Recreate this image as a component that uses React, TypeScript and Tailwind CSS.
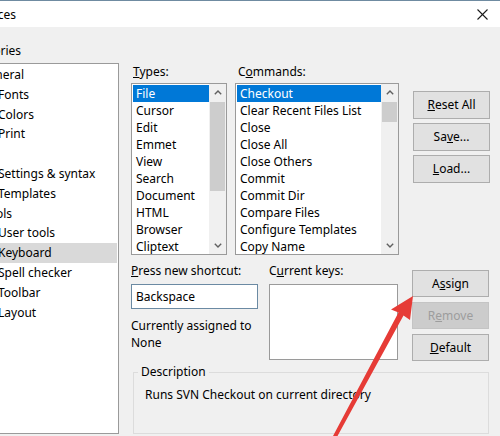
import React from "react";

const font = { fontFamily: '"Noto Sans", "Liberation Sans", sans-serif' };

function Chevron({ up }: { up: boolean }) {
  return (
    <svg width="8" height="5" viewBox="0 0 8 5">
      {up ? (
        <polyline points="0.8,4.2 4,1 7.2,4.2" fill="none" stroke="#606060" strokeWidth="1.4" />
      ) : (
        <polyline points="0.8,0.8 4,4 7.2,0.8" fill="none" stroke="#606060" strokeWidth="1.4" />
      )}
    </svg>
  );
}

function ListBox({
  items,
  width,
  thumbH,
}: {
  items: string[];
  width: string;
  thumbH: string;
}) {
  return (
    <div className={`${width} mt-[3px] h-[172px] border border-[#9a9a9a] bg-white flex flex-row overflow-hidden`}>
      <div className="flex-1 flex flex-col pt-[1px] pl-[1px] min-w-0">
        {items.map((it, i) => (
          <div
            key={it}
            className={
              i === 0
                ? "h-[17px] leading-[17px] pl-[3px] whitespace-nowrap bg-[#0078d7] text-white shrink-0"
                : "h-[17px] leading-[17px] pl-[3px] whitespace-nowrap text-black shrink-0"
            }
          >
            {it}
          </div>
        ))}
      </div>
      <div className="w-[17px] shrink-0 flex flex-col bg-[#f0f0f0]">
        <div className="h-[17px] flex items-center justify-center shrink-0">
          <Chevron up />
        </div>
        <div className={`${thumbH} mt-[1px] mx-[1px] bg-[#cdcdcd] shrink-0`} />
        <div className="flex-1" />
        <div className="h-[17px] flex items-center justify-center shrink-0">
          <Chevron up={false} />
        </div>
      </div>
    </div>
  );
}

function Btn({
  children,
  h,
  disabled,
}: {
  children: React.ReactNode;
  h: string;
  disabled?: boolean;
}) {
  return (
    <div
      className={
        disabled
          ? `${h} border border-[#c4c4c4] bg-[#cccccc] text-[#9d9d9d] flex items-center justify-center`
          : `${h} border border-[#adadad] bg-[#e1e1e1] text-black flex items-center justify-center`
      }
    >
      {children}
    </div>
  );
}

export default function App() {
  const types = ["File", "Cursor", "Edit", "Emmet", "View", "Search", "Document", "HTML", "Browser", "Cliptext"];
  const commands = [
    "Checkout",
    "Clear Recent Files List",
    "Close",
    "Close All",
    "Close Others",
    "Commit",
    "Commit Dir",
    "Compare Files",
    "Configure Templates",
    "Copy Name",
  ];
  const cats: { t: string; top?: boolean; end?: string; sel?: boolean }[] = [
    { t: "General", top: true, end: "w-[24px]" },
    { t: "Fonts" },
    { t: "Colors" },
    { t: "Print" },
    { t: "Editor", top: true, end: "w-[0px]" },
    { t: "Settings & syntax" },
    { t: "Templates" },
    { t: "Tools", top: true, end: "w-[12px]" },
    { t: "User tools" },
    { t: "Keyboard", sel: true },
    { t: "Spell checker" },
    { t: "Toolbar" },
    { t: "Layout" },
  ];

  return (
    <div
      className="w-[500px] h-[436px] overflow-hidden relative flex flex-col bg-[#f0f0f0] text-[12px] text-black"
      style={font}
    >
      {/* title bar */}
      <div className="h-[27px] shrink-0 bg-white border-t border-[#6f8ba1] flex flex-row items-center">
        <div className="mt-[2px] w-[16px] flex justify-end whitespace-nowrap text-[12px] leading-[16px]">Preferences</div>
        <div className="ml-auto mr-[12px] flex items-center">
          <svg width="11" height="11" viewBox="0 0 11 11">
            <line x1="0.5" y1="0.5" x2="10.5" y2="10.5" stroke="#1a1a1a" strokeWidth="1.1" />
            <line x1="10.5" y1="0.5" x2="0.5" y2="10.5" stroke="#1a1a1a" strokeWidth="1.1" />
          </svg>
        </div>
      </div>

      {/* body */}
      <div className="flex-1 flex flex-row">
        {/* left categories */}
        <div className="w-[119px] shrink-0 flex flex-col">
          <div className="mt-[16px] h-[16px] leading-[16px] w-[21px] flex justify-end whitespace-nowrap">Categories</div>
          <div className="mt-[4px] h-[371px] border-y border-r border-[#9a9a9a] bg-white overflow-hidden flex flex-col pt-[1px]">
            {cats.map((c) =>
              c.top ? (
                <div key={c.t} className="h-[19.8px] leading-[19.8px] shrink-0 flex">
                  <div className={`${c.end} flex justify-end whitespace-nowrap`}>{c.t === "Editor" ? "" : c.t}</div>
                </div>
              ) : (
                <div
                  key={c.t}
                  className={
                    c.sel
                      ? "h-[19.8px] leading-[19.8px] shrink-0 whitespace-nowrap bg-[#d9d9d9] mr-[1px]"
                      : "h-[19.8px] leading-[19.8px] shrink-0 whitespace-nowrap"
                  }
                >
                  <span className="ml-[-2px]">{c.t}</span>
                </div>
              )
            )}
          </div>
        </div>

        {/* right area */}
        <div className="flex-1 flex flex-col pl-[12px] pt-[37px]">
          {/* top row */}
          <div className="flex flex-row items-start">
            <div className="w-[96px] flex flex-col">
              <div className="h-[16px] leading-[16px] pl-[2px]">
                <span className="underline">T</span>ypes:
              </div>
              <ListBox items={types} width="w-[96px]" thumbH="h-[89px]" />
            </div>
            <div className="ml-[8px] w-[164px] flex flex-col">
              <div className="h-[16px] leading-[16px] pl-[3px]">
                C<span className="underline">o</span>mmands:
              </div>
              <ListBox items={commands} width="w-[164px]" thumbH="h-[20px]" />
            </div>
            <div className="ml-[14px] w-[77px] pt-[27px] flex flex-col gap-[4px]">
              <Btn h="h-[28px]">
                <span>
                  <span className="underline">R</span>eset All
                </span>
              </Btn>
              <Btn h="h-[28px]">
                <span>
                  Sa<span className="underline">v</span>e...
                </span>
              </Btn>
              <Btn h="h-[28px]">
                <span>
                  <span className="underline">L</span>oad...
                </span>
              </Btn>
            </div>
          </div>

          {/* second row */}
          <div className="mt-[8px] flex flex-row items-start">
            <div className="w-[127px] flex flex-col">
              <div className="h-[16px] leading-[16px] whitespace-nowrap">
                <span className="underline">P</span>ress new shortcut:
              </div>
              <div className="mt-[5px] h-[25px] border border-[#6b8aa3] bg-white pl-[4px] flex items-center">
                Backspace
              </div>
              <div className="mt-[9px] h-[16px] leading-[16px] whitespace-nowrap">Currently assigned to</div>
              <div className="h-[17px] leading-[17px]">None</div>
            </div>
            <div className="ml-[11px] w-[129px] flex flex-col">
              <div className="h-[16px] leading-[16px] whitespace-nowrap">
                C<span className="underline">u</span>rrent keys:
              </div>
              <div className="mt-[5px] h-[76px] border border-[#9a9a9a] bg-white" />
            </div>
            <div className="ml-[14px] w-[77px] pt-[7px] flex flex-col gap-[5px]">
              <Btn h="h-[27px]">
                <span>
                  A<span className="underline">s</span>sign
                </span>
              </Btn>
              <Btn h="h-[27px]" disabled>
                <span>
                  R<span className="underline">e</span>move
                </span>
              </Btn>
              <Btn h="h-[27px]">
                <span>
                  <span className="underline">D</span>efault
                </span>
              </Btn>
            </div>
          </div>

          {/* description */}
          <fieldset className="mt-[3px] ml-[2px] w-[356px] h-[70px] border border-[#dcdcdc] pl-[4px]">
            <legend className="px-[3px] leading-[16px]">Description</legend>
            <div className="mt-[7px] ml-[7px] leading-[16px] whitespace-nowrap">
              Runs SVN Checkout on current directory
            </div>
          </fieldset>
        </div>
      </div>

      {/* red annotation arrow */}
      <svg className="absolute left-0 top-0 pointer-events-none" width="500" height="436" viewBox="0 0 500 436">
        <polygon
          points="413,296 391,309.5 398.5,312.5 333,436 337.5,436 403.5,315.5 410,320"
          fill="#e63b36"
        />
      </svg>
    </div>
  );
}
